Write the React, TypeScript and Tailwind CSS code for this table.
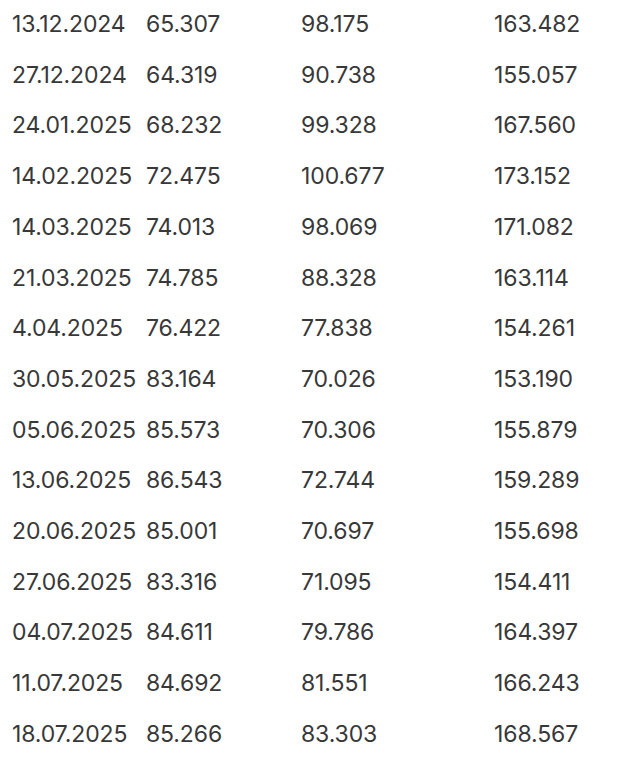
const ROWS: [string, string, string, string][] = [
  ["13.12.2024", "65.307", "98.175", "163.482"],
  ["27.12.2024", "64.319", "90.738", "155.057"],
  ["24.01.2025", "68.232", "99.328", "167.560"],
  ["14.02.2025", "72.475", "100.677", "173.152"],
  ["14.03.2025", "74.013", "98.069", "171.082"],
  ["21.03.2025", "74.785", "88.328", "163.114"],
  ["4.04.2025", "76.422", "77.838", "154.261"],
  ["30.05.2025", "83.164", "70.026", "153.190"],
  ["05.06.2025", "85.573", "70.306", "155.879"],
  ["13.06.2025", "86.543", "72.744", "159.289"],
  ["20.06.2025", "85.001", "70.697", "155.698"],
  ["27.06.2025", "83.316", "71.095", "154.411"],
  ["04.07.2025", "84.611", "79.786", "164.397"],
  ["11.07.2025", "84.692", "81.551", "166.243"],
  ["18.07.2025", "85.266", "83.303", "168.567"],
];

export default function App() {
  return (
    <div className="min-h-[762px] w-[640px] bg-white font-['Inter',sans-serif] text-[23px] tracking-[-0.005em] text-[#383838]">
      <div className="-mt-[1px] flex flex-col">
        {ROWS.map((r) => (
          <div
            key={r[0]}
            className="grid h-[50.7px] grid-cols-[134px_155px_193px_1fr] items-center pl-3"
          >
            <span>{r[0]}</span>
            <span>{r[1]}</span>
            <span>{r[2]}</span>
            <span>{r[3]}</span>
          </div>
        ))}
      </div>
    </div>
  );
}
